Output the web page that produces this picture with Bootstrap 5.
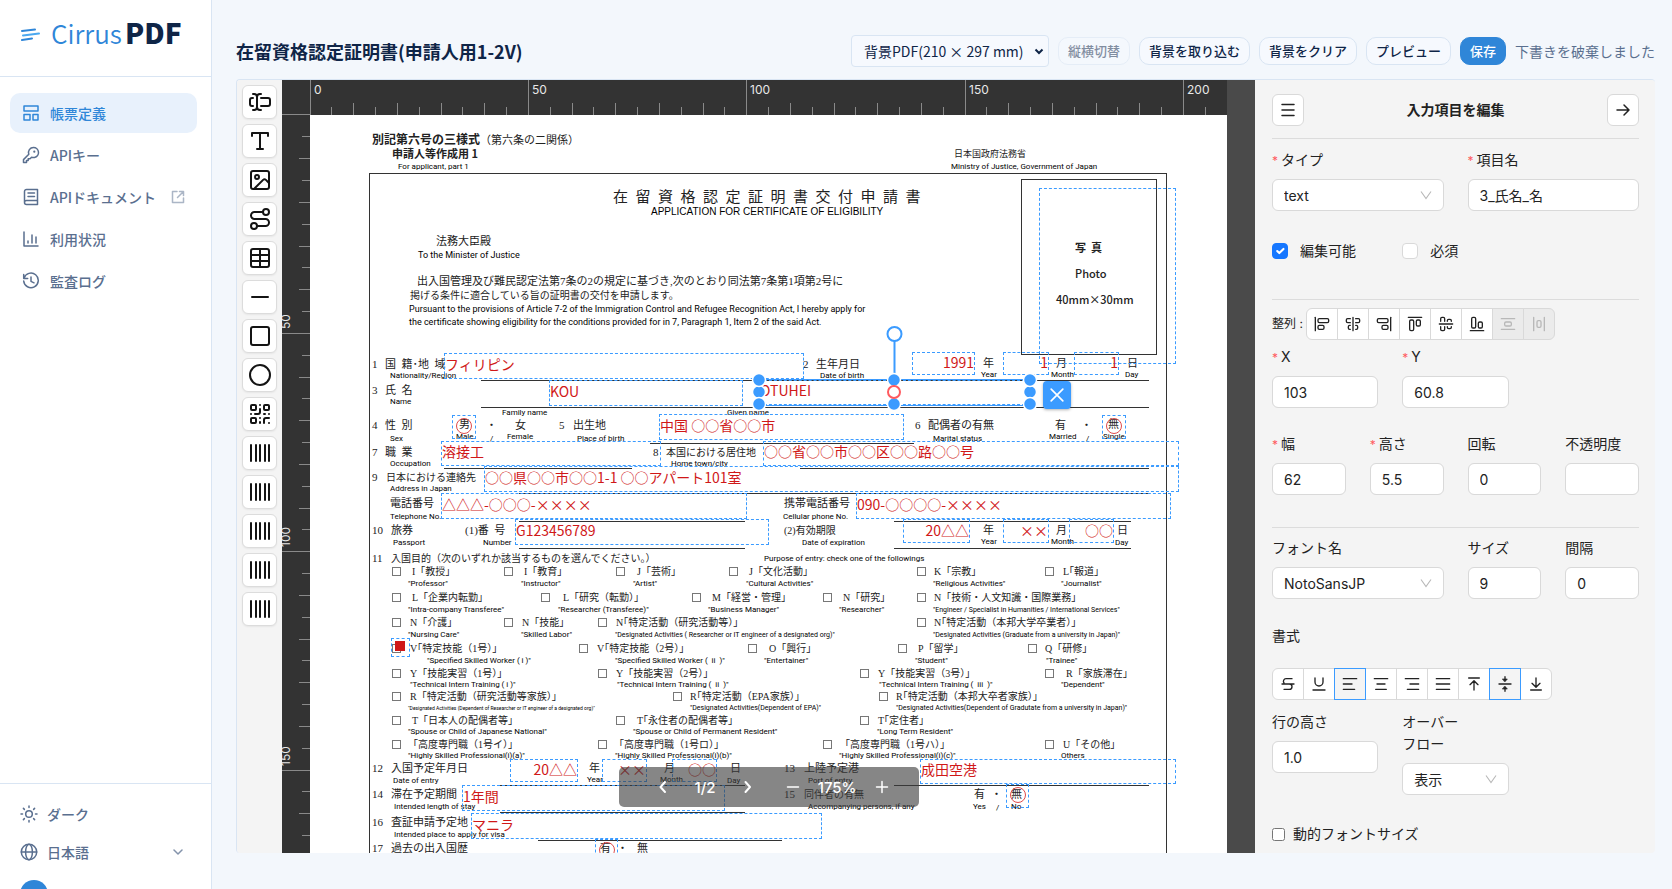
<!DOCTYPE html>
<html lang="ja">
<head>
<meta charset="utf-8">
<meta name="viewport" content="width=device-width, initial-scale=1">
<title>Cirrus PDF - 帳票定義</title>
<link rel="stylesheet" href="https://cdn.jsdelivr.net/npm/bootstrap@5.3.0/dist/css/bootstrap.min.css">
<style>
:root { --navy:#0f2547; --blue:#2f86d8; --slate:#5a6f8f; --line:#d9e5f3; --sel:#3b9bff; --red:#d01818; }
body { font-family:"Noto Sans CJK JP","Noto Sans",sans-serif; font-size:14px; line-height:22px; background:#f3f7fc; color:var(--navy); }
.ic { fill:none; stroke:currentColor; stroke-width:2; stroke-linecap:round; stroke-linejoin:round; display:block; flex:none; }
.ic.thin { stroke-width:1.5; }

/* sidebar */
.side { width:212px; border-right:1px solid var(--line); }
.brand { height:77px; border-bottom:1px solid var(--line); padding:0 20px 7px; gap:10px; }
.brand-a { font-size:26px; font-weight:350; color:var(--blue); }
.brand-b { font-size:28px; font-weight:800; color:var(--navy); }
.side .nav { padding:16px 14px 0 10px; gap:2px; }
.side .nav-link { height:40px; padding:0 12px; gap:10px; border-radius:10px; color:var(--slate); font-weight:500; }
.side .nav-link.active { background:#e8f1fc; color:var(--blue); }
.side .nav-link .ic, .side-foot .ic { stroke-width:1.5; }
.side-foot { border-top:1px solid var(--line); height:106px; padding:11px 20px 0; overflow:hidden; color:var(--slate); }
.side-foot button { height:38px; gap:9px; color:inherit; font-size:14px; font-weight:500; flex:none; }
.avatar { width:28px; height:28px; margin-top:9px; background:var(--blue); }

/* header */
.work { padding:23px 17px 36px 24px; }
.topbar { height:56px; gap:9px; }
.topbar h1 { font-size:18px; font-weight:600; line-height:26px; }
.topbar .form-select { width:198px; height:32px; padding:0 24px 0 12px; font-size:14px; border-color:var(--line); border-radius:4px; background-color:#f6f9fe; color:var(--navy);
  background-image:url("data:image/svg+xml,%3Csvg xmlns='http://www.w3.org/2000/svg' viewBox='0 0 10 10'%3E%3Cpath d='M1.500 3.500 5 7 8.500 3.500' fill='none' stroke='%230f2547' stroke-width='2'/%3E%3C/svg%3E"); background-size:10px; background-position:right 4px center; }
.topbar .btn { height:28px; padding:0 9px; font-size:13px; font-weight:500; line-height:20px; border:1px solid var(--line); border-radius:10px; color:var(--navy); background:#f6f9fe; }
.topbar .btn:disabled { opacity:.5; }
.topbar .btn.save { background:var(--blue); border-color:var(--blue); color:#fff; }
.topbar output { color:var(--slate); }

/* designer */
.designer { border-top:1px solid var(--line); border-left:1px solid var(--line); border-radius:4px; }
.tools { width:45px; padding:5px; gap:5px; background:#f4f4f4; }
.tool { width:35px; height:34px; border:1px solid #dcdcdc; border-radius:6px; background:#fff; color:#141414; box-shadow:0 1px 2px rgba(0,0,0,.06); }
.stage { background:#4a4a4a; }
.ruler-top { height:35px; width:945px; background:#333; display:block; }
.ruler-left { width:28px; background:#333; display:block; flex:none; }
.ruler-top path, .ruler-left path { stroke:#8a8a8a; fill:none; }
.ruler-top text, .ruler-left text { fill:#e8e8e8; font:12px Inter,sans-serif; }
.sheet { width:917px; background:#fff; flex:none; }
.print { width:917px; height:738px; display:block; }
.print text { white-space:pre; fill:#222; }
.print .j, .print .k, .print .s { font-family:"Liberation Serif","Noto Sans CJK JP",serif; }
.print .j { font-size:11px; } .print .k { font-size:10px; } .print .s { font-size:9px; }
.print .t { font-family:"Liberation Serif","Noto Sans CJK JP",serif; font-size:15px; }
.print .b { font:700 12px "Noto Sans CJK JP",sans-serif; } .print .c { font:700 11px "Noto Sans CJK JP",sans-serif; }
.print .p { font:500 11px "Noto Sans CJK JP",sans-serif; }
.print .e, .print .f, .print .g, .print .a { font-family:Roboto,"Liberation Sans",sans-serif; fill:#000; }
.print .a { font-size:9px; } .print .e { font-size:8px; } .print .f { font-size:7px; } .print .g { font-size:5px; }
.print .h { font:10px "Liberation Sans",sans-serif; fill:#000; }
.print path, .print rect { fill:none; stroke:#333; }
.print rect.tick { stroke:#777; }
.field { position:absolute; display:flex; align-items:center; border:1px dashed var(--sel); color:var(--red); font-size:14px; line-height:18px; padding:0 0 5px; white-space:nowrap; }
.field.end { justify-content:flex-end; padding-bottom:3px; }
.field.ring { padding:0; }
.field.ring::after { content:""; width:16px; height:16px; margin:0 auto 3px; border:1px solid #e04a4a; border-radius:50%; flex:none; }
.field.dot { padding:0 0 3px; }
.field.dot::after { content:""; width:10px; height:10px; margin:0 0 1px 3px; background:var(--red); }
.field.sel { outline:1px solid var(--sel); }
.overlay { position:absolute; left:0; top:0; width:917px; height:738px; pointer-events:none; }
.del { position:absolute; left:733px; top:266px; width:28px; height:28px; background:var(--sel); color:#fff; border-radius:4px; box-shadow:0 1px 3px rgba(0,0,0,.3); }
.pager { position:absolute; left:50%; bottom:46px; transform:translateX(-50%); width:300px; height:40px; padding:0 27px 0 34px; border-radius:5px; background:rgba(60,60,60,.62); color:#fff; font:500 15px Inter,sans-serif; }
.pg { gap:22px; } .zm { gap:15px; }

/* property panel */
.props { width:400px; padding:14px 16px 0 17px; background:#f4f4f4; color:#222; font-family:Inter,"Noto Sans CJK JP",sans-serif; }
.props h2 { font-size:14px; line-height:22px; font-weight:600; }
.sq { width:32px; height:32px; border:1px solid #d9d9d9; border-radius:6px; background:#fff; color:#222; }
.props hr { margin:0; color:#dcdcdc; opacity:1; }
.g2, .g3, .g4 { display:grid; column-gap:24px; align-items:start; }
.g2 { grid-template-columns:1fr 1fr; } .g3 { grid-template-columns:repeat(3,1fr); } .g4 { grid-template-columns:repeat(4,1fr); }
.wide { grid-column:span 2; }
.props label.lb { display:block; margin-bottom:8px; }
.req::before { content:"*"; color:#ff5a5f; margin-right:3px; font-size:12px; line-height:1; }
.props .form-control, .props .form-select { height:32px; padding:0 11px; font-size:14px; border-color:#d9d9d9; border-radius:6px; background-color:#fff; color:#222; }
.props .form-select { background-image:url("data:image/svg+xml,%3Csvg xmlns='http://www.w3.org/2000/svg' viewBox='0 0 12 12'%3E%3Cpath d='M1 2.500 6 9.500 11 2.500' fill='none' stroke='%23b8b8b8' stroke-width='1.100'/%3E%3C/svg%3E"); background-size:12px; background-position:right 11px center; }
.props .ck { width:16px; height:16px; margin:0; border-color:#d9d9d9; border-radius:4px; float:none; flex:none; }
.props .ck:checked { background-color:#1677ff; border-color:#1677ff; }
.props .btn-group .btn { width:32px; height:32px; flex:none; padding:0; border:1px solid #d9d9d9; background:#fff; color:#222; border-radius:0; display:flex; align-items:center; justify-content:center; }
.props .btn-group .btn:first-child { border-radius:6px 0 0 6px; } .props .btn-group .btn:last-child { border-radius:0 6px 6px 0; }
.props .btn-group .btn:disabled { background:#ebebeb; color:#b8b8b8; opacity:1; }
.props .btn-group .btn.on { border-color:var(--sel); background:#f4f4f4; z-index:2; }
.dyn { width:13px; height:13px; margin:0 8px 0 0; }
.sec-a { padding:10px 0 29px; } .sec-b { padding-bottom:37px; } .sec-c { padding:8px 0 6px; }
.al { width:34px; font-size:12px; white-space:nowrap; }
.sec-d { padding-bottom:25px; } .sec-e { padding-bottom:32px; } .sec-f { padding:9px 0 26px; }
.sec-g { padding-bottom:21px; } .sec-h { padding:11px 0 28px; }
</style>
</head>
<body>
<div class="d-flex vh-100 overflow-hidden">

<aside class="side d-flex flex-column bg-white flex-shrink-0">
  <a class="brand d-flex align-items-center text-decoration-none" href="#">
    <svg width="21" height="16" viewBox="0 0 21 16" fill="none" stroke-width="2" stroke-linecap="round"><path d="M2 4 15 2.500" stroke="#2f86d8"/><path d="M3 8.500 19 6.500" stroke="#4aa8f0"/><path d="M2 13 12 11.500" stroke="#2f86d8"/></svg>
    <span class="text-nowrap"><span class="brand-a">Cirrus</span> <span class="brand-b">PDF</span></span>
  </a>
  <nav class="nav flex-column flex-nowrap flex-grow-1">
    <a class="nav-link active d-flex align-items-center" href="#"><svg class="ic" width="18" height="18" viewBox="0 0 18 18"><path d="M2 2h14v5H2zM2 10.500h6V16H2zM11 10.500h5V16h-5z"/></svg>帳票定義</a>
    <a class="nav-link d-flex align-items-center" href="#"><svg class="ic" width="18" height="18" viewBox="0 0 18 18"><path d="M11.500 1.500a5 5 0 0 1 1 9.900c-1 .3-2 .1-2.900-.2L8 12.800H6.200v1.800H4.500v1.900H1.500v-2.900l5.300-5.300A5 5 0 0 1 11.500 1.500z"/><path d="M12.300 5.700h.01" stroke-width="2.200"/></svg>APIキー</a>
    <a class="nav-link d-flex align-items-center" href="#"><svg class="ic" width="18" height="18" viewBox="0 0 18 18"><path d="M15.500 12.500V1.500H4.500a2 2 0 0 0-2 2v11a2 2 0 0 0 2 2h11v-4h-11a2 2 0 0 0-2 2M6 5h6.500M6 8.500h6.500M15.500 12.500v4"/></svg>APIドキュメント<svg class="ic ms-auto opacity-50" width="14" height="14" viewBox="0 0 14 14"><path d="M6 1.500H1.500v11h11V8M8.500 1.500h4v4M12.500 1.500 6.500 7.500"/></svg></a>
    <a class="nav-link d-flex align-items-center" href="#"><svg class="ic" width="18" height="18" viewBox="0 0 18 18"><path d="M2 2v14h14M6 13v-2M10 13V5M14 13V7"/></svg>利用状況</a>
    <a class="nav-link d-flex align-items-center" href="#"><svg class="ic" width="18" height="18" viewBox="0 0 18 18"><path d="M2 6.200A7.300 7.300 0 1 1 1.700 9M1.700 2.500v4h4M9 5v4.300l3 1.500"/></svg>監査ログ</a>
  </nav>
  <div class="side-foot d-flex flex-column">
    <button class="btn border-0 p-0 d-flex align-items-center"><svg class="ic" width="18" height="18" viewBox="0 0 18 18"><circle cx="9" cy="9" r="3.300"/><path d="M9 1v1.500M9 15.500V17M1 9h1.500M15.500 9H17M3.400 3.400l1 1M13.600 13.600l1 1M3.400 14.600l1-1M13.600 4.400l1-1"/></svg>ダーク</button>
    <button class="btn border-0 p-0 d-flex align-items-center"><svg class="ic" width="18" height="18" viewBox="0 0 18 18"><circle cx="9" cy="9" r="7.700"/><ellipse cx="9" cy="9" rx="3.400" ry="7.700"/><path d="M1.300 9h15.400"/></svg>日本語<svg class="ic ms-auto me-2 opacity-75" width="10" height="10" viewBox="0 0 10 10"><path d="M1 3l4 4 4-4"/></svg></button>
    <span class="avatar rounded-circle flex-shrink-0"></span>
  </div>
</aside>

<main class="work flex-grow-1 d-flex flex-column overflow-hidden">
  <header class="topbar d-flex align-items-center flex-shrink-0 text-nowrap">
    <h1 class="m-0 me-auto">在留資格認定証明書(申請人用1-2V)</h1>
    <select class="form-select" aria-label="背景PDF"><option>背景PDF(210 × 297 mm)</option></select>
    <button class="btn" disabled>縦横切替</button>
    <button class="btn">背景を取り込む</button>
    <button class="btn">背景をクリア</button>
    <button class="btn">プレビュー</button>
    <button class="btn save">保存</button>
    <output>下書きを破棄しました</output>
  </header>

  <div class="designer d-flex flex-grow-1 overflow-hidden">
    <div class="tools d-flex flex-column flex-shrink-0" id="tools"></div>

    <section class="stage position-relative flex-grow-1 overflow-hidden d-flex flex-column">
      <svg class="ruler-top flex-shrink-0" id="rt"></svg>
      <div class="d-flex flex-grow-1 overflow-hidden">
        <svg class="ruler-left h-100" id="rl"></svg>
        <div class="sheet position-relative overflow-hidden" id="sheet">
          <svg class="print" id="print" viewBox="0 -1 917 738"></svg>
        </div>
      </div>
      <div class="pager d-flex align-items-center justify-content-between">
        <div class="pg d-flex align-items-center">
          <button class="btn border-0 text-white p-0" aria-label="前のページ"><svg class="ic" width="20" height="20" viewBox="0 0 20 20"><path d="M12 5 7.500 10 12 15"/></svg></button>
          <span>1/2</span>
          <button class="btn border-0 text-white p-0" aria-label="次のページ"><svg class="ic" width="20" height="20" viewBox="0 0 20 20"><path d="M7.500 5 12 10 7.500 15"/></svg></button>
        </div>
        <div class="zm d-flex align-items-center">
          <button class="btn border-0 text-white p-0" aria-label="縮小"><svg class="ic thin" width="20" height="20" viewBox="0 0 20 20"><path d="M4.500 10h11"/></svg></button>
          <span>175%</span>
          <button class="btn border-0 text-white p-0" aria-label="拡大"><svg class="ic thin" width="20" height="20" viewBox="0 0 20 20"><path d="M4.500 10h11M10 4.500v11"/></svg></button>
        </div>
      </div>
    </section>

    <form class="props flex-shrink-0 overflow-hidden">
      <div class="d-flex align-items-center justify-content-between pb-2">
        <button type="button" class="sq d-flex align-items-center justify-content-center p-0" aria-label="一覧"><svg class="ic thin" width="16" height="16" viewBox="0 0 16 16"><path d="M2 2.500h12M2 8h12M2 13.500h12"/></svg></button>
        <h2 class="m-0">入力項目を編集</h2>
        <button type="button" class="sq d-flex align-items-center justify-content-center p-0" aria-label="閉じる"><svg class="ic thin" width="18" height="18" viewBox="0 0 18 18"><path d="M3 9h12M10 4l5 5-5 5"/></svg></button>
      </div>
      <hr class="mt-1">
      <div class="g2 sec-a">
        <div><label class="lb req" for="ty">タイプ</label><select class="form-select" id="ty"><option>text</option></select></div>
        <div><label class="lb req" for="nm">項目名</label><input class="form-control" id="nm" value="3_氏名_名"></div>
      </div>
      <div class="g3 sec-b">
        <label class="d-flex align-items-center gap-2"><input class="form-check-input ck me-1" type="checkbox" checked>編集可能</label>
        <label class="d-flex align-items-center gap-2"><input class="form-check-input ck me-1" type="checkbox">必須</label>
      </div>
      <hr>
      <div class="d-flex align-items-center sec-c"><span class="al">整列 :</span><div class="btn-group" id="align"></div></div>
      <div class="g3 sec-d">
        <div><label class="lb req" for="px">X</label><input class="form-control" id="px" value="103"></div>
        <div><label class="lb req" for="py">Y</label><input class="form-control" id="py" value="60.8"></div>
      </div>
      <div class="g4 sec-e">
        <div><label class="lb req" for="pw">幅</label><input class="form-control" id="pw" value="62"></div>
        <div><label class="lb req" for="ph">高さ</label><input class="form-control" id="ph" value="5.5"></div>
        <div><label class="lb" for="pr">回転</label><input class="form-control" id="pr" value="0"></div>
        <div><label class="lb text-nowrap" for="po">不透明度</label><input class="form-control" id="po"></div>
      </div>
      <hr>
      <div class="g4 sec-f">
        <div class="wide"><label class="lb" for="fn">フォント名</label><select class="form-select" id="fn"><option>NotoSansJP</option></select></div>
        <div><label class="lb" for="fs">サイズ</label><input class="form-control" id="fs" value="9"></div>
        <div><label class="lb" for="fg">間隔</label><input class="form-control" id="fg" value="0"></div>
      </div>
      <div class="sec-g">書式</div>
      <div class="btn-group" id="fmt"></div>
      <div class="g3 sec-h">
        <div><label class="lb" for="lh">行の高さ</label><input class="form-control" id="lh" value="1.0"></div>
        <div><label class="lb" for="ov">オーバー<br>フロー</label><select class="form-select" id="ov"><option>表示</option></select></div>
      </div>
      <label class="d-flex align-items-center"><input class="dyn" type="checkbox">動的フォントサイズ</label>
    </form>
  </div>
</main>
</div>
<script src="https://cdn.jsdelivr.net/npm/bootstrap@5.3.0/dist/js/bootstrap.bundle.min.js"></script>
<script>
const $ = id => document.getElementById(id);
const icon = (d, size, sw) => `<svg class="ic" width="${size}" height="${size}" viewBox="0 0 24 24" stroke-width="${sw || 2}">${d}</svg>`;
const p = d => `<path d="${d}"/>`;
const r = (x, y, w, h, rx = 2) => `<rect x="${x}" y="${y}" width="${w}" height="${h}" rx="${rx}"/>`;

/* element palette */
const bars = p('M3 4v16M8 4v16M12 4v16M17 4v16M21 4v16');
const tools = [
  ['入力', p('M5 4h1a3 3 0 0 1 3 3 3 3 0 0 1 3-3h1M13 20h-1a3 3 0 0 1-3-3 3 3 0 0 1-3 3H5M5 16H4a2 2 0 0 1-2-2v-4a2 2 0 0 1 2-2h1M13 8h7a2 2 0 0 1 2 2v4a2 2 0 0 1-2 2h-7M9 7v10')],
  ['テキスト', p('M4 7V4h16v3M9 20h6M12 4v16')],
  ['画像', r(3,3,18,18) + '<circle cx="9" cy="9" r="2"/>' + p('m21 15-3.086-3.086a2 2 0 0 0-2.828 0L6 21')],
  ['経路', '<circle cx="6" cy="19" r="3"/><circle cx="18" cy="5" r="3"/>' + p('M9 19h8.500a3.500 3.500 0 0 0 0-7h-11a3.500 3.500 0 0 1 0-7H15')],
  ['表', r(3,3,18,18) + p('M12 3v18M3 9h18M3 15h18')],
  ['線', p('M4 12h16')],
  ['四角形', r(3,3,18,18)],
  ['円', '<circle cx="12" cy="12" r="10"/>'],
  ['QRコード', r(3,3,5,5,1) + r(16,3,5,5,1) + r(3,16,5,5,1) + p('M21 16h-3a2 2 0 0 0-2 2v3M21 21v.01M12 7v3a2 2 0 0 1-2 2H7M3 12h.01M12 3h.01M12 16v.01M16 12h1M21 12v.01M12 21v-1')],
  ['バーコード', bars], ['バーコード', bars], ['バーコード', bars], ['バーコード', bars], ['バーコード', bars]
];
$('tools').innerHTML = tools.map(t => `<button class="tool p-0 d-flex align-items-center justify-content-center" aria-label="${t[0]}">${icon(t[1], 24)}</button>`).join('');

/* alignment and text format groups */
const align = [
  r(6,14,9,6) + r(6,4,16,6) + p('M2 2v20'),
  p('M12 2v20M8 10H4a2 2 0 0 1-2-2V6c0-1.100.9-2 2-2h4M16 10h4a2 2 0 0 0 2-2V6a2 2 0 0 0-2-2h-4M8 20H7a2 2 0 0 1-2-2v-2c0-1.100.9-2 2-2h1M16 14h1a2 2 0 0 1 2 2v2a2 2 0 0 1-2 2h-1'),
  r(2,4,16,6) + r(9,14,9,6) + p('M22 22V2'),
  r(4,6,6,16) + r(14,6,6,9) + p('M22 2H2'),
  p('M2 12h20M10 16v4a2 2 0 0 1-2 2H6a2 2 0 0 1-2-2v-4M10 8V4a2 2 0 0 0-2-2H6a2 2 0 0 0-2 2v4M20 16v1a2 2 0 0 1-2 2h-2a2 2 0 0 1-2-2v-1M14 8V7c0-1.100.9-2 2-2h2a2 2 0 0 1 2 2v1'),
  r(4,2,6,16) + r(14,9,6,9) + p('M22 22H2'),
  r(7,9,10,6) + p('M22 20H2M22 4H2'),
  r(9,7,6,10) + p('M4 22V2M20 22V2')
];
$('align').innerHTML = align.map((d, i) => `<button type="button" class="btn" aria-label="整列${i + 1}" ${i > 5 ? 'disabled' : ''}>${icon(d, 16)}</button>`).join('');
const fmt = [
  p('M18 4H9a4 4 0 0 0-3 6.500M14 12a4 4 0 0 1 0 8H6M3 12h18'),
  p('M6 3v6a6 6 0 0 0 12 0V3M3 21h18'),
  p('M2 4h20M2 12h13M2 20h17'),
  p('M2 4h20M6 12h12M4 20h16'),
  p('M2 4h20M9 12h13M5 20h17'),
  p('M2 4h20M2 12h20M2 20h20'),
  p('M4 3h16M12 21V8M6 13l6-6 6 6'),
  p('M3 12h18M12 1v3M12 20v3') + '<path fill="currentColor" stroke-width="1" d="M8.500 4.500h7L12 8.500zM8.500 19.500h7L12 15.500z"/>',
  p('M4 21h16M12 3v13M6 11l6 6 6-6')
];
$('fmt').innerHTML = fmt.map((d, i) => `<button type="button" class="btn ${i == 2 || i == 7 ? 'on' : ''}" aria-label="書式${i + 1}">${icon(d, 16)}</button>`).join('');

/* rulers: a tick every 5 mm, a label every 50 mm */
const MM = 4.367;
let topTicks = '', leftTicks = '', topLabels = '', leftLabels = '';
for (let mm = 0; mm <= 210; mm += 5) {
  const at = Math.floor(mm * MM), big = mm % 50 == 0, len = big ? 35 : mm % 10 == 0 ? 12 : 8;
  topTicks += `M${at + 28}.5 35v${-len}`;
  if (big) topLabels += `<text x="${at + 32}" y="14">${mm}</text>`;
  if (mm) leftTicks += `M28 ${at}.5h${big ? -28 : mm % 10 == 0 ? -11 : -8}`;
  if (mm && big) leftLabels += `<text transform="translate(8 ${at - 4}) rotate(-90)">${mm}</text>`;
}
$('rt').innerHTML = p(topTicks) + p('M0 34.500h28') + topLabels;
$('rl').innerHTML = p(leftTicks) + leftLabels;

/* printed form: [style, x, baseline, text] */
const T = [
['b',62,28,'別記第六号の三様式'],['j',170,28,'（第六条の二関係）'],['c',82,42,'申請人等作成用 1'],['e',88,54,'For applicant, part 1'],
['t',303,86,[...'在留資格認定証明書交付申請書'].join('  ')],['h',341,100,'APPLICATION FOR CERTIFICATE OF ELIGIBILITY'],
['j',126,129,'法務大臣殿'],['a',108,143,'To the Minister of Justice'],
['j',107,169,'出入国管理及び難民認定法第7条の2の規定に基づき,次のとおり同法第7条第1項第2号に'],['k',100,183,'掲げる条件に適合している旨の証明書の交付を申請します。'],
['a',99,197,'Pursuant to the provisions of Article 7-2 of the Immigration Control and Refugee Recognition Act, I hereby apply for'],
['a',99,210,'the certificate showing eligibility for the conditions provided for in 7, Paragraph 1, Item 2 of the said Act.'],
['s',644,41,'日本国政府法務省'],['e',641,54,'Ministry of Justice, Government of Japan'],
['c',765,136,'写  真'],['p',765,162,'Photo'],['p',746,188,'40mm×30mm'],
['j',62,252,'1'],['j',75,252,'国  籍･地  域'],['e',80,263,'Nationality/Region'],['j',493,252,'2'],['j',506,252,'生年月日'],['e',510,263,'Date of birth'],
['j',673,251,'年'],['e',671,262,'Year'],['j',746,251,'月'],['e',741,262,'Month'],['j',817,251,'日'],['e',815,262,'Day'],
['j',62,278,'3'],['j',75,278,'氏  名'],['e',80,289,'Name'],['e',192,300,'Family name'],['e',417,300,'Given name'],
['j',62,313,'4'],['j',75,313,'性  別'],['e',80,326,'Sex'],['j',149,312,'男'],['e',146,324,'Male'],['j',176,313,'・'],['e',180,326,'/'],['j',205,313,'女'],['e',197,324,'Female'],
['j',249,313,'5'],['j',263,313,'出生地'],['e',267,326,'Place of birth'],['j',605,313,'6'],['j',618,313,'配偶者の有無'],['e',623,326,'Marital status'],
['j',745,313,'有'],['e',739,324,'Married'],['j',771,313,'・'],['e',776,326,'/'],['j',798,312,'無'],['e',793,324,'Single'],
['j',62,340,'7'],['j',75,340,'職  業'],['e',80,351,'Occupation'],['j',343,340,'8'],['k',356,340,'本国における居住地'],['e',361,351,'Home town/city'],
['j',62,365,'9'],['k',76,365,'日本における連絡先'],['e',80,376,'Address in Japan'],['j',80,391,'電話番号'],['e',80,404,'Telephone No.'],
['j',474,391,'携帯電話番号'],['e',473,404,'Cellular phone No.'],
['j',62,418,'10'],['j',81,418,'旅券'],['e',83,430,'Passport'],['j',155,418,'(1)番  号'],['e',173,430,'Number'],
['k',474,418,'(2)有効期限'],['e',492,430,'Date of expiration'],['j',673,418,'年'],['e',671,429,'Year'],['j',746,418,'月'],['e',741,429,'Month'],['j',807,418,'日'],['e',805,430,'Day'],
['j',62,446,'11'],['k',81,446,'入国目的（次のいずれか該当するものを選んでください。）'],['e',454,446,'Purpose of entry: check one of the followings'],
['j',62,656,'12'],['j',81,656,'入国予定年月日'],['e',83,668,'Date of entry'],['j',279,656,'年'],['e',277,667,'Year'],['j',354,656,'月'],['e',350,667,'Month'],['j',420,656,'日'],['e',417,668,'Day'],
['j',474,656,'13'],['j',494,656,'上陸予定港'],['e',498,668,'Port of entry'],
['j',62,682,'14'],['j',81,682,'滞在予定期間'],['e',84,694,'Intended length of stay'],['j',474,682,'15'],['k',494,682,'同伴者の有無'],['e',498,694,'Accompanying persons, if any'],
['j',664,682,'有'],['e',663,694,'Yes'],['j',681,682,'・'],['e',686,695,'/'],['j',701,682,'無'],['e',701,694,'No'],
['j',62,710,'16'],['j',81,710,'査証申請予定地'],['e',84,722,'Intended place to apply for visa'],
['j',62,736,'17'],['j',81,736,'過去の出入国歴'],['j',290,736,'有'],['j',307,736,'・'],['j',327,736,'無']
];
/* purposes of entry: rows of [box x, label x, label, note x, note, note style] */
const Q = [
[459,471,[82,102,'I「教授」',98,'"Professor"'],[194,214,'I「教育」',211,'"Instructor"'],[306,327,'J「芸術」',323,'"Artist"'],[419,439,'J「文化活動」',436,'"Cultural Activities"'],[607,624,'K「宗教」',623,'"Religious Activities"'],[735,753,'L｢報道」',751,'"Journalist"']],
[485,497,[82,102,'L「企業内転勤」',98,'"Intra-company Transferee"'],[231,253,'L「研究（転勤）」',248,'"Researcher (Transferee)"'],[382,402,'M「経営・管理」',398,'"Business Manager"'],[513,533,'N「研究」',529,'"Researcher"'],[607,624,'N「技術・人文知識・国際業務」',623,'"Engineer / Specialist in Humanities / International Services"','f']],
[510,522,[82,100,'N「介護」',98,'"Nursing Care"'],[194,212,'N「技能」',211,'"Skilled Labor"'],[288,306,'N｢特定活動（研究活動等）」',305,'"Designated Activities ( Researcher or IT engineer of a designated org)"','f'],[607,624,'N｢特定活動（本邦大学卒業者）」',623,'"Designated Activities (Graduate from a university in Japan)"','f']],
[536,548,[82,100,'V｢特定技能（1号）」',117,'"Specified Skilled Worker ( i )"'],[269,287,'V｢特定技能（2号）」',305,'"Specified Skilled Worker (  ii  )"'],[438,459,'O「興行」',454,'"Entertainer"'],[588,608,'P「留学」',605,'"Student"'],[718,735,'Q「研修」',736,'"Trainee"']],
[561,572,[82,100,'Y「技能実習（1号）」',100,'"Technical Intern Training ( i )"'],[288,306,'Y「技能実習（2号）」',307,'"Technical Intern Training (  ii  )"'],[550,568,'Y「技能実習（3号）」',569,'"Technical Intern Training (  iii  )"'],[735,756,'R「家族滞在」',751,'"Dependent"']],
[584,595,[82,100,'R「特定活動（研究活動等家族）」',98,'"Designated Activities (Dependent of Researcher or IT engineer of a designated org)"','g'],[363,380,'R｢特定活動（EPA家族）」',380,'"Designated Activities(Dependent of EPA)"','f'],[569,586,'R｢特定活動（本邦大卒者家族）」',586,'"Designated Activities(Dependent of Gradutate from a university in Japan)"','f']],
[608,619,[82,102,'T「日本人の配偶者等」',98,'"Spouse or Child of Japanese National"'],[306,327,'T｢永住者の配偶者等」',323,'"Spouse or Child of Permanent Resident"'],[550,568,'T｢定住者」',567,'"Long Term Resident"']],
[632,643,[82,98,'「高度専門職（1号イ）」',98,'"Highly Skilled Professional(i)(a)"'],[288,304,'「高度専門職（1号ロ）」',305,'"Highly Skilled Professional(i)(b)"'],[513,530,'「高度専門職（1号ハ）」',529,'"Highly Skilled Professional(i)(c)"'],[735,753,'U「その他」',751,'Others']]
];
/* the English notes sit one pixel above the Japanese baseline grid */
const tx = (c, x, y, s) => `<text class="${c}" x="${x}" y="${'aefgh'.includes(c) ? y - 1 : y}">${s}</text>`;
let out = '<rect x="59.500" y="57.500" width="797" height="800"/><rect x="711.500" y="63.500" width="135" height="175"/>';
[[171,839,264],[171,839,291],[340,604,327],[134,322,352],[490,839,352],[209,839,377],[209,435,405],[584,821,405],[209,435,432],[584,821,432],[190,435,669],[584,839,669],[190,435,696],[228,472,724]]
  .forEach(l => out += p(`M${l[0]} ${l[2]}.500H${l[1]}`));
T.forEach(t => out += tx(...t));
Q.forEach(([jy, ey, ...cells]) => cells.forEach(c => {
  out += `<rect class="tick" x="${c[0]}.5" y="${jy - 8}.5" width="8" height="8"/>` + tx('k', c[1], jy, c[2]) + tx(c[5] || 'e', c[3], ey, c[4]);
}));
$('print').innerHTML = out;

/* input fields on the sheet: [left, top, right, bottom, value, kind] */
const F = [
[729,73,866,249],[134,238,494,264,'フィリピン'],[602,237,665,260,'1991','end'],[693,237,739,260,'1','end'],[764,237,809,260,'1','end'],
[239,265,433,291,'KOU'],[449,265,720,290,'OTUHEI','sel'],[142,300,166,324,'','ring'],[349,299,594,325,'中国 ○○省○○市'],[792,300,816,324,'','ring'],
[131,326,351,351,'溶接工'],[453,326,869,351,'○○省○○市○○区○○路○○号'],[174,351,869,377,'○○県○○市○○1-1 ○○アパート101室'],
[131,378,437,404,'△△△-○○○-××××'],[546,378,861,404,'090-○○○○-××××'],[205,404,459,430,'G123456789'],
[593,404,660,428,'20△△','end'],[693,404,739,428,'××','end'],[759,404,804,428,'○○','end'],[81,523,100,542,'','dot'],
[200,644,268,667,'20△△','end'],[292,644,337,667,'××','end'],[362,644,407,667,'○○','end'],[610,644,866,669,'成田空港'],
[152,670,415,696,'1年間'],[696,669,719,693,'','ring'],[161,698,512,724,'マニラ'],[285,724,308,748,'','ring']
];
$('sheet').insertAdjacentHTML('beforeend', F.map(f =>
  `<div class="field ${f[5] || ''}" style="left:${f[0]}px;top:${f[1]}px;width:${f[2] - f[0]}px;height:${f[3] - f[1]}px">${f[4] || ''}</div>`).join(''));

/* handles of the selected field */
const dot = (x, y) => `<circle cx="${x}" cy="${y}" r="6.500" fill="#3b9bff" stroke="#fff" stroke-width="1.500"/>`;
$('sheet').insertAdjacentHTML('beforeend', `<svg class="overlay" viewBox="0 0 917 738">
<path d="M584.500 226v39" stroke="#3b9bff" stroke-width="2"/><circle cx="584.500" cy="219" r="7" fill="#fff" stroke="#3b9bff" stroke-width="2"/>
${dot(449,277)}${dot(720,277)}${dot(449,265)}${dot(584,265)}${dot(720,265)}${dot(449,289)}${dot(584,289)}${dot(720,289)}
<circle cx="584" cy="277" r="6" fill="#fff" stroke="#ff5a5f" stroke-width="2"/></svg>
<button class="del border-0 p-0 d-flex align-items-center justify-content-center" aria-label="削除">${icon(p('M5 5l14 14M19 5 5 19'), 20)}</button>`);
</script>
</body>
</html>
